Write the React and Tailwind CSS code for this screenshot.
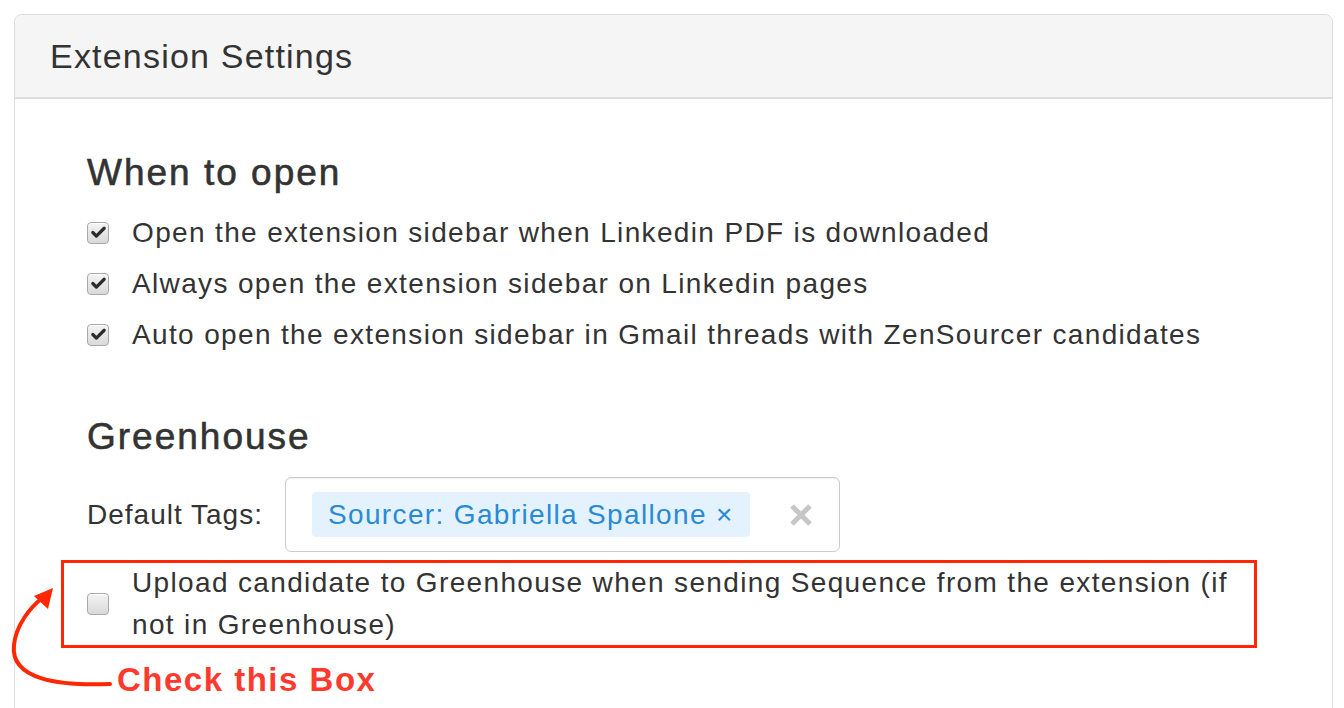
import { Check } from 'lucide-react';

function Box({ checked }) {
    return (
        <span className="flex h-[22px] w-[22px] shrink-0 items-center justify-center rounded-[4px] border border-[#a9a9a9] bg-gradient-to-b from-[#f4f4f4] to-[#d9d9d9] shadow-[inset_0_1px_0_#fff]">
            {checked && <Check size={17} strokeWidth={4.5} className="text-[#2b2b2b]" />}
        </span>
    );
}

const openOptions = [
    'Open the extension sidebar when Linkedin PDF is downloaded',
    'Always open the extension sidebar on Linkedin pages',
    'Auto open the extension sidebar in Gmail threads with ZenSourcer candidates',
];

export default function App() {
    return (
        <div className="relative h-[708px] overflow-hidden bg-white pt-[14px] font-['Liberation_Sans',Arial,sans-serif] text-[#333]">
            <div className="ml-[14px] h-[760px] w-[1319px] rounded-t-[8px] border border-[#dddddd]">
                {/* panel header */}
                <div className="flex h-[84px] items-center rounded-t-[8px] border-b-2 border-[#dddddd] bg-[#f5f5f5] px-[35px]">
                    <h2 className="text-[34px] leading-none tracking-[1.2px] text-[#333]">Extension Settings</h2>
                </div>

                <div className="pl-[72px] pt-[54px]">
                    <h3 className="text-[37px] leading-[40px] tracking-[2px] [-webkit-text-stroke:0.6px_#333]">When to open</h3>
                    <div className="mt-[14px]">
                        {openOptions.map((label) => (
                            <div key={label} className="flex h-[51px] items-center gap-[23px] text-[28px] tracking-[1.35px]">
                                <Box checked />
                                <span>{label}</span>
                            </div>
                        ))}
                    </div>

                    <h3 className="mt-[57px] text-[37px] leading-[40px] tracking-[2px] [-webkit-text-stroke:0.6px_#333]">Greenhouse</h3>
                    <div className="mt-[20px] flex items-center">
                        <span className="w-[198px] text-[28px] tracking-[1px]">Default Tags:</span>
                        <div className="flex h-[75px] w-[555px] items-center rounded-[6px] border border-[#cccccc] pl-[26px] shadow-[inset_0_1px_1px_rgba(0,0,0,0.06)]">
                            <span className="flex h-[45px] items-center rounded-[4px] bg-[#e3f2fd] px-[16px] text-[28px] tracking-[1.35px] text-[#2a8ad4]">
                                Sourcer: Gabriella Spallone ×
                            </span>
                            <svg width="24" height="24" viewBox="0 0 24 24" className="ml-[39px]">
                                <path d="M3 3L21 21M21 3L3 21" stroke="#c7c7c7" strokeWidth="5" strokeLinecap="butt" />
                            </svg>
                        </div>
                    </div>

                    <div className="-ml-[26px] mt-[8px] flex h-[88px] w-[1196px] items-center border-[3px] border-[#ff2600] pl-[23px]">
                        <Box />
                        <span className="ml-[23px] text-[28px] leading-[42px] tracking-[1.35px]">
                            Upload candidate to Greenhouse when sending Sequence from the extension (if
                            <br />
                            not in Greenhouse)
                        </span>
                    </div>

                    <div className="ml-[30px] mt-[14px] text-[33px] font-bold leading-[36px] tracking-[1.5px] text-[#fd3a2d]">Check this Box</div>
                </div>
            </div>

            {/* annotation arrow */}
            <svg className="absolute left-0 top-0" width="140" height="708" viewBox="0 0 140 708">
                <path d="M110 684 C 60 686, 10 680, 14 645 C 16 625, 30 608, 42 598" fill="none" stroke="#ff2600" strokeWidth="4" strokeLinecap="round" />
                <path d="M53 588 L34 596 L48 609 Z" fill="#ff2600" />
            </svg>
        </div>
    );
}
